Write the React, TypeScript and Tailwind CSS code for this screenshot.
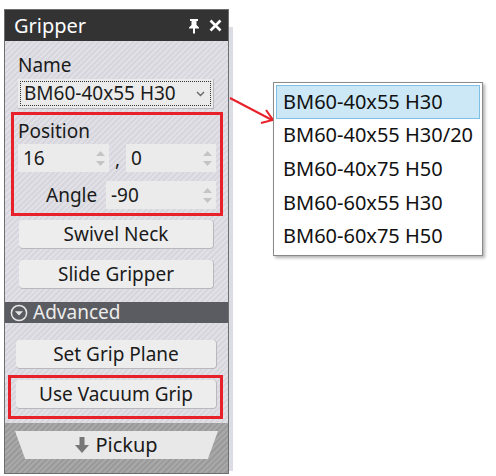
import React from "react";

const font = { fontFamily: '"Noto Sans", "Open Sans", sans-serif' };

const hatch =
  "bg-[repeating-linear-gradient(135deg,#e0e0e6_0px,#e0e0e6_2px,#d6d6dc_2px,#d6d6dc_4px)]";

const Spin = ({ value, className }: { value: string; className: string }) => (
  <div className={`flex items-center justify-between bg-[#ebebeb] h-[28px] pl-[5px] pr-[4px] ${className}`}>
    <span className="text-[19px] text-[#1a1a1a] leading-none">{value}</span>
    <div className="flex flex-col items-center gap-[5px]">
      <svg width="9" height="5" viewBox="0 0 9 5">
        <path d="M0 5 L4.5 0 L9 5 Z" fill="#c4c4c4" />
      </svg>
      <svg width="9" height="5" viewBox="0 0 9 5">
        <path d="M0 0 L4.5 5 L9 0 Z" fill="#c4c4c4" />
      </svg>
    </div>
  </div>
);

const Btn = ({ label, className }: { label: string; className: string }) => (
  <div
    className={`flex items-center justify-center h-[29px] rounded-[4px] bg-[#ededed] border-b border-r border-[#b8b8bc] text-[19px] text-[#1a1a1a] leading-none ${className}`}
  >
    {label}
  </div>
);

const items = ["BM60-40x55 H30", "BM60-40x55 H30/20", "BM60-40x75 H50", "BM60-60x55 H30", "BM60-60x75 H50"];

export default function App() {
  return (
    <div className="relative w-[496px] h-[476px] bg-white overflow-hidden" style={font}>
      <div className="absolute left-[229px] top-[27px] w-[4px] h-[444px] bg-[#dcdce4]" />
      <div className="ml-[4px] mt-[9px] w-[225px] h-[465px] border border-[#6e6e6e] flex flex-col relative">
        <div className="h-[31px] bg-[#333333] flex items-center justify-between pl-[9px] pr-[6px]">
          <span className="text-[20px] text-white leading-none">Gripper</span>
          <div className="flex items-center gap-[9px]">
            <svg width="12" height="16" viewBox="0 0 12 16">
              <path d="M2 1 H10 V3 H8.5 V7 L11 9.5 V10.5 H7 V15.5 H5 V10.5 H1 V9.5 L3.5 7 V3 H2 Z" fill="#ffffff" />
            </svg>
            <svg width="13" height="13" viewBox="0 0 13 13">
              <path d="M1.5 1.5 L11.5 11.5 M11.5 1.5 L1.5 11.5" stroke="#ffffff" strokeWidth="2.6" />
            </svg>
          </div>
        </div>
        <div className={`flex-1 flex flex-col ${hatch}`}>
          <div className="pl-[13px] pt-[12px] flex flex-col">
            <span className="text-[19px] text-[#1a1a1a] leading-[24px]">Name</span>
            <div className="mt-[2px] w-[196px] h-[30px] bg-[#ebebeb] border-r border-b border-[#b8b8bc] p-[2px]">
              <div className="h-full border border-dotted border-[#333] flex items-center justify-between pl-[3px] pr-[5px]">
                <span className="text-[19px] text-[#1a1a1a] leading-none">BM60-40x55 H30</span>
                <svg width="9" height="6" viewBox="0 0 9 6">
                  <path d="M1 1 L4.5 4.5 L8 1" stroke="#666" strokeWidth="1.4" fill="none" />
                </svg>
              </div>
            </div>
            <span className="mt-[10px] text-[19px] text-[#1a1a1a] leading-[24px]">Position</span>
            <div className="mt-[1px] flex items-end">
              <Spin value="16" className="w-[91px]" />
              <span className="w-[17px] text-center text-[19px] text-[#1a1a1a] leading-none mb-[3px]">,</span>
              <Spin value="0" className="w-[90px]" />
            </div>
            <div className="mt-[9px] flex items-center">
              <span className="ml-[28px] w-[60px] text-[19px] text-[#1a1a1a] leading-none">Angle</span>
              <Spin value="-90" className="w-[110px]" />
            </div>
            <Btn label="Swivel Neck" className="mt-[11px] ml-[1px] w-[195px]" />
            <Btn label="Slide Gripper" className="mt-[11px] ml-[1px] w-[195px]" />
          </div>
          <div className="mt-[13px] h-[21px] bg-[#5b5c61] flex items-center pl-[5px] gap-[5px]">
            <svg width="18" height="18" viewBox="0 0 18 18">
              <circle cx="9" cy="9" r="7.6" stroke="#e6e6e6" strokeWidth="1.5" fill="none" />
              <path d="M5 7.3 L13 7.3 L9 11.6 Z" fill="#e6e6e6" />
            </svg>
            <span className="text-[19px] text-[#ececec] leading-none">Advanced</span>
          </div>
          <div className="pl-[11px] pt-[17px] flex flex-col">
            <Btn label="Set Grip Plane" className="w-[201px]" />
            <Btn label="Use Vacuum Grip" className="mt-[11px] w-[201px]" />
          </div>
          <div className="mt-[14px] flex-1 bg-[repeating-linear-gradient(135deg,#a8a8a8_0px,#a8a8a8_2px,#9a9a9a_2px,#9a9a9a_4px)] pt-[8px] px-[10px]">
            <div className="h-[28px] bg-[#e8e8e8] [clip-path:polygon(0_0,100%_0,95%_100%,5%_100%)] flex items-center justify-center gap-[6px]">
              <svg width="14" height="16" viewBox="0 0 14 16">
                <path d="M4.5 0 H9.5 V8 H14 L7 16 L0 8 H4.5 Z" fill="#777777" />
              </svg>
              <span className="text-[20px] text-[#1a1a1a] leading-none">Pickup</span>
            </div>
          </div>
        </div>
      </div>

      <div className="absolute left-[11px] top-[112px] w-[212px] h-[104px] border-[3px] border-[#e8202a]" />
      <div className="absolute left-[8px] top-[375px] w-[215px] h-[44px] border-[3px] border-[#e8202a]" />

      <svg className="absolute left-[228px] top-[92px]" width="50" height="40" viewBox="0 0 50 40">
        <path d="M2 6 L44 28" stroke="#e8202a" strokeWidth="2" />
        <path d="M38 18 L45 28 L33 31" stroke="#e8202a" strokeWidth="2" fill="none" />
      </svg>

      <div className="absolute left-[273px] top-[82px] w-[210px] h-[174px] bg-white border border-[#8a8a8a] shadow-[2px_2px_3px_rgba(0,0,0,0.3)] p-[2px] flex flex-col">
        {items.map((it, i) => (
          <div
            key={it}
            className={`h-[34px] flex items-center pl-[6px] text-[20px] text-[#111] ${i === 0 ? "bg-[#cce8f6] border border-[#7dbfe6]" : "border border-transparent"}`}
          >
            {it}
          </div>
        ))}
      </div>
    </div>
  );
}
